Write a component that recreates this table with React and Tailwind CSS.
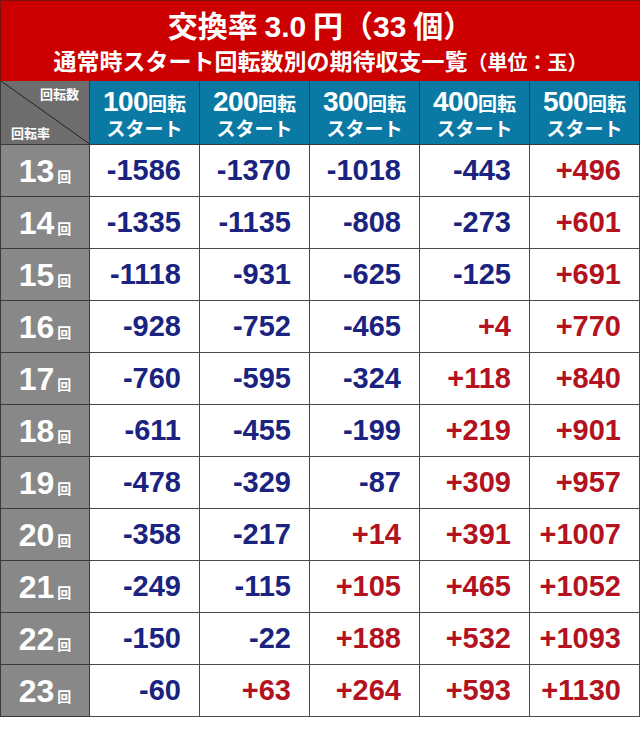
const cols = [100, 200, 300, 400, 500]

const rows = [
  [13, -1586, -1370, -1018, -443, 496],
  [14, -1335, -1135, -808, -273, 601],
  [15, -1118, -931, -625, -125, 691],
  [16, -928, -752, -465, 4, 770],
  [17, -760, -595, -324, 118, 840],
  [18, -611, -455, -199, 219, 901],
  [19, -478, -329, -87, 309, 957],
  [20, -358, -217, 14, 391, 1007],
  [21, -249, -115, 105, 465, 1052],
  [22, -150, -22, 188, 532, 1093],
  [23, -60, 63, 264, 593, 1130],
]

const jp = "font-['Noto_Sans_CJK_JP',sans-serif]"
const num = "font-['Liberation_Sans','Noto_Sans_CJK_JP',sans-serif]"

function Corner() {
  return (
    <div className="relative h-[64px] bg-[#6d6d6d] border-r border-b border-l border-[#3a3a3a] overflow-hidden">
      <svg className="absolute inset-0" width="90" height="64" viewBox="0 0 90 64">
        <line x1="0" y1="0" x2="90" y2="64" stroke="#222" strokeWidth="1" />
      </svg>
      <div className={`absolute right-[10px] top-[3px] text-[13px] font-bold text-white ${jp}`}>回転数</div>
      <div className={`absolute left-[10px] bottom-[2px] text-[13px] font-bold text-white ${jp}`}>回転率</div>
    </div>
  )
}

function HeadCell({ n }) {
  return (
    <div className="h-[64px] bg-[#0a79a4] border-r border-b border-[#3a3a3a] flex flex-col items-center justify-center text-white">
      <div className="flex items-baseline leading-none">
        <span className={`text-[28px] font-bold tracking-[-0.5px] ${num}`}>{n}</span>
        <span className={`text-[19px] font-bold ${jp}`}>回転</span>
      </div>
      <div className={`mt-[2px] text-[19px] font-bold leading-none ${jp}`}>スタート</div>
    </div>
  )
}

function Value({ v }) {
  const plus = v > 0
  return (
    <div
      className={`h-[52px] border-r border-b border-[#4a4a4a] flex items-center justify-end pr-[18px] text-[29px] font-bold ${num} ${
        plus ? "text-[#b3121f]" : "text-[#1a2380]"
      }`}
    >
      {plus ? `+${v}` : v}
    </div>
  )
}

export default function App() {
  return (
    <div className="w-[640px] h-[731px] bg-white">
      <div className="h-[81px] bg-[#cc0000] border-t border-l border-[#7a1010] flex flex-col items-center text-white font-bold">
        <div className={`mt-[6px] text-[30px] leading-[34px] ${jp}`}>
          交換率 <span className={num}>3.0</span> 円（<span className={num}>33</span> 個）
        </div>
        <div className={`mt-[2px] text-[23px] leading-[28px] ${jp}`}>
          通常時スタート回転数別の期待収支一覧<span className="text-[20px]">（単位：玉）</span>
        </div>
      </div>
      <div className="grid grid-cols-[90px_repeat(5,110px)]">
        <Corner />
        {cols.map((c) => (
          <HeadCell key={c} n={c} />
        ))}
        {rows.map(([r, ...vals]) => [
          <div
            key={`l${r}`}
            className="h-[52px] bg-[#888888] border-l border-r border-b border-[#3a3a3a] flex items-center justify-center text-white font-bold"
          >
            <span className={`text-[32px] leading-none ${num}`}>{r}</span>
            <span className={`ml-[3px] mt-[10px] text-[14px] leading-none ${jp}`}>回</span>
          </div>,
          ...vals.map((v, i) => <Value key={`${r}-${i}`} v={v} />),
        ])}
      </div>
    </div>
  )
}
